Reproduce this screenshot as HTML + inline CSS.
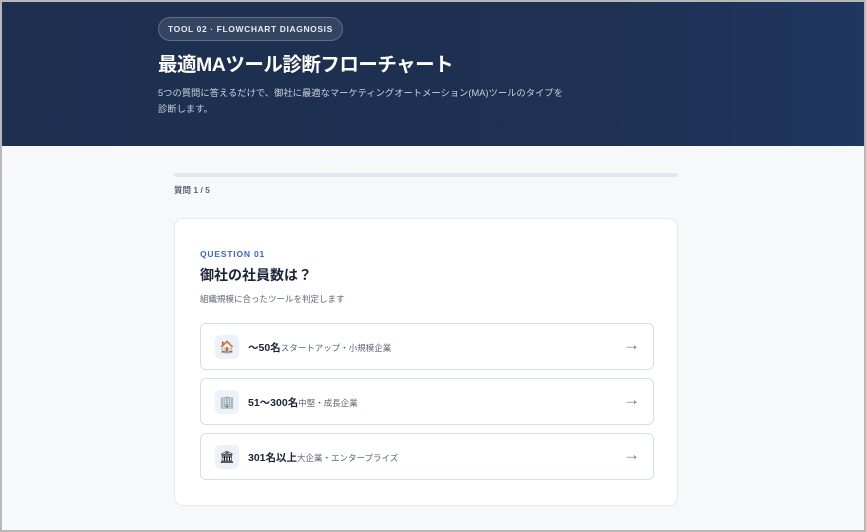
<!DOCTYPE html>
<html><head><meta charset="utf-8"><style>
*{box-sizing:border-box;margin:0;padding:0}
html,body{width:866px;height:532px;overflow:hidden}
body{font-family:"Liberation Sans","Noto Sans CJK JP",sans-serif;background:#f7f8fa;border:2px solid #b8b8b8;position:relative}
.hd{position:absolute;left:0;top:0;width:862px;height:144px;background:linear-gradient(90deg,#1d2f4f 0%,#1e3152 70%,#1e3660 100%)}
.tag{position:absolute;left:156px;top:15px;height:24px;padding:0 9px;border:1px solid rgba(255,255,255,.22);background:rgba(255,255,255,.1);border-radius:12px;color:#e6ebf3;font-size:8.5px;letter-spacing:.6px;line-height:22px;font-weight:bold}
h1{position:absolute;left:156px;top:46px;color:#fff;font-size:19.5px;font-weight:bold;letter-spacing:-.5px}
.desc{position:absolute;left:156px;top:83px;color:#c9d1de;font-size:9.3px;line-height:16px;width:410px}
.bar{position:absolute;left:172px;top:171px;width:504px;height:4px;background:#e3e6ed;border-radius:2px}
.cnt{position:absolute;left:172px;top:182px;font-size:8.5px;color:#5b6474;font-weight:bold}
.card{position:absolute;left:172px;top:216px;width:504px;height:288px;background:#fff;border:1px solid #e4e7ec;border-radius:9px}
.q{position:absolute;left:25px;top:30px;color:#3c66c8;font-size:8.5px;font-weight:bold;letter-spacing:.8px}
.t{position:absolute;left:25px;top:46px;color:#1b2538;font-size:14px;font-weight:bold}
.s{position:absolute;left:25px;top:74px;color:#5c6574;font-size:8.5px}
.opt{position:absolute;left:25px;width:454px;height:47px;border:1px solid #d9dde4;border-radius:6px;background:#fff}
.ic{position:absolute;left:14px;top:11px;width:24px;height:24px;background:#edf2fa;border-radius:5px;text-align:center;line-height:24px;font-size:12px}
.lb{position:absolute;left:47px;top:16px;font-size:10.5px;font-weight:bold;color:#1b2538}
.lb span{font-size:8.5px;font-weight:normal;color:#5c6574}
.ar{position:absolute;right:13px;top:11px;font-size:17px;color:#6f7785}
</style></head><body>
<div class="hd">
<div class="tag">TOOL 02 · FLOWCHART DIAGNOSIS</div>
<h1>最適MAツール診断フローチャート</h1>
<div class="desc">5つの質問に答えるだけで、御社に最適なマーケティングオートメーション(MA)ツールのタイプを診断します。</div>
</div>
<div class="bar"></div>
<div class="cnt">質問 1 / 5</div>
<div class="card">
<div class="q">QUESTION 01</div>
<div class="t">御社の社員数は？</div>
<div class="s">組織規模に合ったツールを判定します</div>
<div class="opt" style="top:104px"><div class="ic">🏠</div><div class="lb">〜50名<span>スタートアップ・小規模企業</span></div><div class="ar">→</div></div>
<div class="opt" style="top:159px"><div class="ic">🏢</div><div class="lb">51〜300名<span>中堅・成長企業</span></div><div class="ar">→</div></div>
<div class="opt" style="top:214px"><div class="ic">🏛</div><div class="lb">301名以上<span>大企業・エンタープライズ</span></div><div class="ar">→</div></div>
</div>
</body></html>
